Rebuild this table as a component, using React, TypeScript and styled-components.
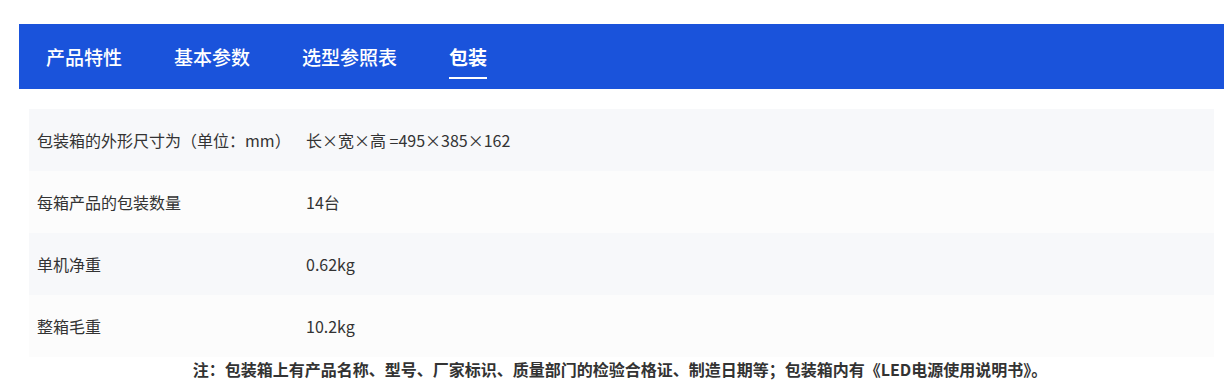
import React, { useState } from "react";
import styled, { createGlobalStyle } from "styled-components";

const GlobalStyle = createGlobalStyle`
  html, body {
    margin: 0;
    padding: 0;
    background: #ffffff;
    font-family: "Noto Sans CJK SC", "Noto Sans", sans-serif;
  }
`;

const Page = styled.div`
  padding: 24px 8px 0 19px;
  width: 1232px;
  box-sizing: border-box;
`;

const TabBar = styled.nav`
  display: flex;
  align-items: center;
  height: 65px;
  width: 1205px;
  box-sizing: border-box;
  padding-left: 27px;
  gap: 52px;
  background: #1a53db;
`;

const Tab = styled.button<{ $active?: boolean }>`
  position: relative;
  border: 0;
  background: transparent;
  padding: 0;
  margin: 0;
  cursor: pointer;
  font-family: inherit;
  font-size: 19px;
  line-height: 26px;
  color: #ffffff;
  font-weight: ${(p) => (p.$active ? 700 : 500)};

  &::after {
    content: "";
    position: absolute;
    left: 0;
    right: 0;
    bottom: -9px;
    height: 2px;
    background: #ffffff;
    display: ${(p) => (p.$active ? "block" : "none")};
  }
`;

const Table = styled.div`
  margin: 20px 0 0 10px;
  width: 1185px;
  display: flex;
  flex-direction: column;
`;

const Row = styled.div<{ $odd: boolean }>`
  display: grid;
  grid-template-columns: 269px 1fr;
  align-items: center;
  height: 62px;
  padding-left: 8px;
  background: ${(p) => (p.$odd ? "#f7f8fa" : "#fcfcfc")};
  font-size: 16px;
  color: #333333;
`;

const Cell = styled.div`
  white-space: nowrap;
`;

const Note = styled.p`
  margin: 0 0 0 -15px;
  text-align: center;
  font-size: 16px;
  line-height: 24px;
  font-weight: 700;
  color: #333333;
  width: 1232px;
`;

const tabs = ["产品特性", "基本参数", "选型参照表", "包装"];

const rows: [string, string][] = [
  ["包装箱的外形尺寸为（单位：mm）", "长×宽×高 =495×385×162"],
  ["每箱产品的包装数量", "14台"],
  ["单机净重", "0.62kg"],
  ["整箱毛重", "10.2kg"],
];

export default function App() {
  const [active, setActive] = useState(3);
  return (
    <>
      <GlobalStyle />
      <Page>
        <TabBar>
          {tabs.map((t, i) => (
            <Tab key={t} $active={i === active} onClick={() => setActive(i)}>
              {t}
            </Tab>
          ))}
        </TabBar>
        <Table>
          {rows.map(([k, v], i) => (
            <Row key={k} $odd={i % 2 === 0}>
              <Cell>{k}</Cell>
              <Cell>{v}</Cell>
            </Row>
          ))}
        </Table>
        <Note>
          注：包装箱上有产品名称、型号、厂家标识、质量部门的检验合格证、制造日期等；包装箱内有《LED电源使用说明书》。
        </Note>
      </Page>
    </>
  );
}
